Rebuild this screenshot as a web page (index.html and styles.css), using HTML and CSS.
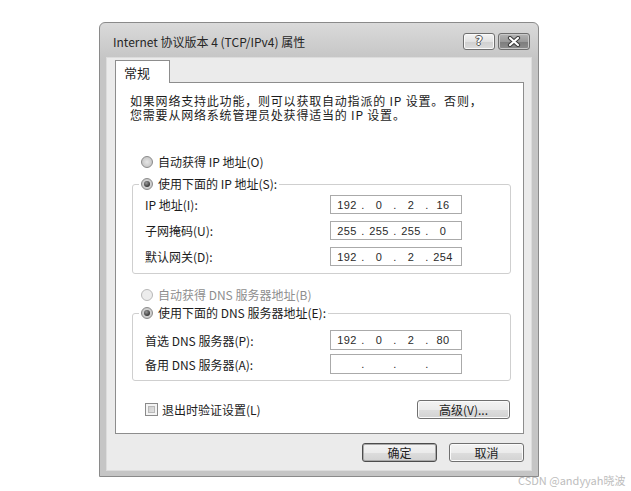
FILE: index.html
```html
<!DOCTYPE html>
<html lang="zh-CN">
<head>
    <meta charset="UTF-8" />
    <meta name="viewport" content="width=device-width, initial-scale=1" />
    <title>Internet 协议版本 4 (TCP/IPv4) 属性</title>
    <link rel="stylesheet" href="styles.css">
</head>
<body>
<div class="window">
    <div class="title-bar">
        <span class="title">Internet 协议版本 4 (TCP/IPv4) 属性</span>
        <div class="title-buttons">
            <button class="btn-help">?</button>
            <button class="btn-close">
                <svg width="14" height="11" viewBox="0 0 14 11">
                    <path d="M3 2 L11 9 M11 2 L3 9" stroke="#3a3a3a" stroke-width="4.2" stroke-linecap="round" fill="none"/>
                    <path d="M3 2 L11 9 M11 2 L3 9" stroke="#ffffff" stroke-width="2.2" stroke-linecap="round" fill="none"/>
                </svg>
            </button>
        </div>
    </div>

    <div class="client">
        <div class="tabs">
            <div class="tab active">常规</div>
        </div>

        <div class="panel">
            <p class="description">如果网络支持此功能，则可以获取自动指派的 IP 设置。否则，<br>您需要从网络系统管理员处获得适当的 IP 设置。</p>

            <label class="option option-first"><span class="radio"></span>自动获得 IP 地址(O)</label>

            <fieldset class="group group-ip">
                <legend><label class="option"><span class="radio checked"></span>使用下面的 IP 地址(S):</label></legend>
                <div class="row"><span class="row-label">IP 地址(I):</span><div class="ip-field" data-ip="192.0.2.16"></div></div>
                <div class="row"><span class="row-label">子网掩码(U):</span><div class="ip-field" data-ip="255.255.255.0"></div></div>
                <div class="row"><span class="row-label">默认网关(D):</span><div class="ip-field" data-ip="192.0.2.254"></div></div>
            </fieldset>

            <label class="option option-disabled"><span class="radio"></span>自动获得 DNS 服务器地址(B)</label>

            <fieldset class="group group-dns">
                <legend><label class="option"><span class="radio checked"></span>使用下面的 DNS 服务器地址(E):</label></legend>
                <div class="row"><span class="row-label">首选 DNS 服务器(P):</span><div class="ip-field" data-ip="192.0.2.80"></div></div>
                <div class="row"><span class="row-label">备用 DNS 服务器(A):</span><div class="ip-field" data-ip="..."></div></div>
            </fieldset>

            <div class="bottom-row">
                <label class="check"><span class="checkbox"></span>退出时验证设置(L)</label>
                <button class="btn-dialog btn-advanced">高级(V)...</button>
            </div>
        </div>

        <div class="dialog-buttons">
            <button class="btn-dialog btn-default">确定</button>
            <button class="btn-dialog">取消</button>
        </div>
    </div>
</div>

<div class="watermark">CSDN @andyyah晓波</div>

<script>
    // monta os quatro blocos de cada campo de IP
    document.querySelectorAll(".ip-field").forEach(campo => {
        const partes = campo.dataset.ip.split(".");
        campo.innerHTML = partes.map(p => `<span class="seg">${p}</span>`).join('<span class="dot">.</span>');
    });
</script>
</body>
</html>
```

FILE: styles.css
```css
:root {
    --frame: #c5c5c5;
    --frame-edge: #8a8a8a;
    --client: #ebebeb;
    --panel-border: #8d8d8d;
    --group-border: #cfcfcf;
    --field-border: #aaaaaa;
    --text: #1c1c1c;
    --text-disabled: #8e8e8e;
}

html, body {
    margin: 0;
    height: 100%;
}

body {
    background: #fff;
    font-family: "Noto Sans CJK SC", "Noto Sans", sans-serif;
    font-size: 12px;
    color: var(--text);
    position: relative;
}

.window {
    width: 440px;
    height: 455px;
    box-sizing: border-box;
    margin: 22px 0 0 99px;
    padding: 0 7px 6px;
    border: 1px solid var(--frame-edge);
    border-radius: 6px 6px 0 0;
    background: linear-gradient(#dadada, var(--frame) 36px, var(--frame));
    display: flex;
    flex-direction: column;
}

.title-bar {
    height: 35px;
    flex: none;
    display: flex;
    justify-content: space-between;
    align-items: flex-start;
}

.title {
    margin: 11px 0 0 6px;
    line-height: 16px;
    font-size: 12px;
    color: #262626;
}

.title-buttons {
    display: flex;
    gap: 3px;
    margin: 10px 1px 0 0;
}

.btn-help,
.btn-close {
    width: 32px;
    height: 17px;
    padding: 0;
    border: 1px solid #6f6f6f;
    border-radius: 3px;
    display: flex;
    align-items: center;
    justify-content: center;
}

.btn-help {
    background: linear-gradient(#f4f4f4, #e2e2e2 50%, #d0d0d0 51%, #dcdcdc);
    box-shadow: inset 0 0 0 1px #fafafa;
    font-family: "DejaVu Sans", sans-serif;
    font-weight: bold;
    font-size: 12px;
    line-height: 15px;
    color: #fff;
    text-shadow: 1px 0 0 #555, -1px 0 0 #555, 0 1px 0 #555, 0 -1px 0 #555;
}

.btn-close {
    background: linear-gradient(#b4b4b4, #9a9a9a 50%, #7c7c7c 51%, #8e8e8e);
    box-shadow: inset 0 0 0 1px #c9c9c9;
}

.client {
    flex: 1;
    background: var(--client);
    padding: 2px 7px 0 8px;
    display: flex;
    flex-direction: column;
    box-shadow: 0 0 0 1px #dcdcdc;
}

.tabs {
    display: flex;
    height: 22px;
    flex: none;
}

.tab {
    width: 55px;
    box-sizing: border-box;
    padding: 3px 0 0 8px;
    font-size: 13px;
    line-height: 17px;
    background: #fff;
    border: 1px solid var(--panel-border);
    border-bottom: none;
    margin-bottom: -1px;
    position: relative;
    z-index: 1;
}

.panel {
    height: 352px;
    box-sizing: border-box;
    flex: none;
    background: #fff;
    border: 1px solid var(--panel-border);
    padding-top: 11px;
}

.description {
    margin: 0 0 0 14px;
    font-size: 12px;
    line-height: 14px;
    letter-spacing: 0.8px;
}

.option {
    display: flex;
    align-items: center;
    gap: 5px;
    height: 14px;
    line-height: 14px;
    white-space: nowrap;
}

.option-first {
    margin: 33px 0 0 25px;
}

.option-disabled {
    margin: 14px 0 0 25px;
    color: var(--text-disabled);
}

.radio {
    width: 12px;
    height: 12px;
    box-sizing: border-box;
    border-radius: 50%;
    border: 1px solid #8a8a8a;
    background: radial-gradient(circle at 50% 50%, #e6e6e6, #c8c8c8 70%, #dedede);
    display: flex;
    align-items: center;
    justify-content: center;
}

.option-disabled .radio {
    border-color: #b8b8b8;
    background: #ececec;
}

.radio.checked::after {
    content: "";
    width: 6px;
    height: 6px;
    border-radius: 50%;
    background: radial-gradient(circle at 40% 35%, #9a9a9a, #2a2a2a 80%);
}

.group {
    margin: 8px 12px 0 16px;
    padding: 4px 0 7px 0;
    border: 1px solid var(--group-border);
    border-radius: 3px;
    min-width: 0;
}

.group legend {
    margin-left: 6px;
    padding: 0 2px;
}

.group-dns {
    margin-top: 4px;
    padding-top: 10px;
    padding-bottom: 6px;
}

.row {
    display: flex;
    align-items: center;
    padding-left: 12px;
}

.group-ip .row + .row {
    margin-top: 7px;
}

.group-dns .row + .row {
    margin-top: 4px;
}

.row-label {
    width: 185px;
    flex: none;
    white-space: nowrap;
}

.ip-field {
    width: 132px;
    height: 19px;
    box-sizing: border-box;
    border: 1px solid var(--field-border);
    background: #fff;
    display: flex;
    align-items: center;
    padding-left: 3px;
    font-family: "Liberation Sans", sans-serif;
    font-size: 11px;
    letter-spacing: 0.4px;
    color: #2a2a2a;
}

.group-dns .ip-field {
    height: 20px;
}

.seg {
    width: 26px;
    text-align: center;
}

.dot {
    width: 6px;
    text-align: center;
}

.bottom-row {
    display: flex;
    justify-content: space-between;
    align-items: center;
    margin: 19px 13px 0 29px;
}

.check {
    display: flex;
    align-items: center;
    gap: 4px;
}

.checkbox {
    width: 13px;
    height: 13px;
    box-sizing: border-box;
    border: 1px solid #8a8a8a;
    background: #f4f4f4;
    box-shadow: inset 0 0 0 2px #f4f4f4, inset 0 0 0 3px #b9b9b9;
    background-image: linear-gradient(135deg, #c4c4c4, #ececec);
}

.btn-dialog {
    width: 75px;
    height: 19px;
    padding: 0;
    border: 1px solid #707070;
    border-radius: 3px;
    background: linear-gradient(#f3f3f3, #ebebeb 50%, #dddddd 51%, #d2d2d2);
    box-shadow: inset 0 0 0 1px #fbfbfb;
    font-family: "Noto Sans CJK SC", sans-serif;
    font-size: 12px;
    line-height: 17px;
    color: var(--text);
}

.btn-advanced {
    width: 93px;
}

.btn-default {
    border-color: #4c4c4c;
    box-shadow: inset 0 0 0 1px #a9a9a9;
}

.dialog-buttons {
    display: flex;
    justify-content: flex-end;
    gap: 12px;
    margin-top: 9px;
}

.watermark {
    position: absolute;
    top: 473px;
    left: 518px;
    font-size: 11px;
    line-height: 14px;
    color: #bdbdbd;
    white-space: nowrap;
}
```
